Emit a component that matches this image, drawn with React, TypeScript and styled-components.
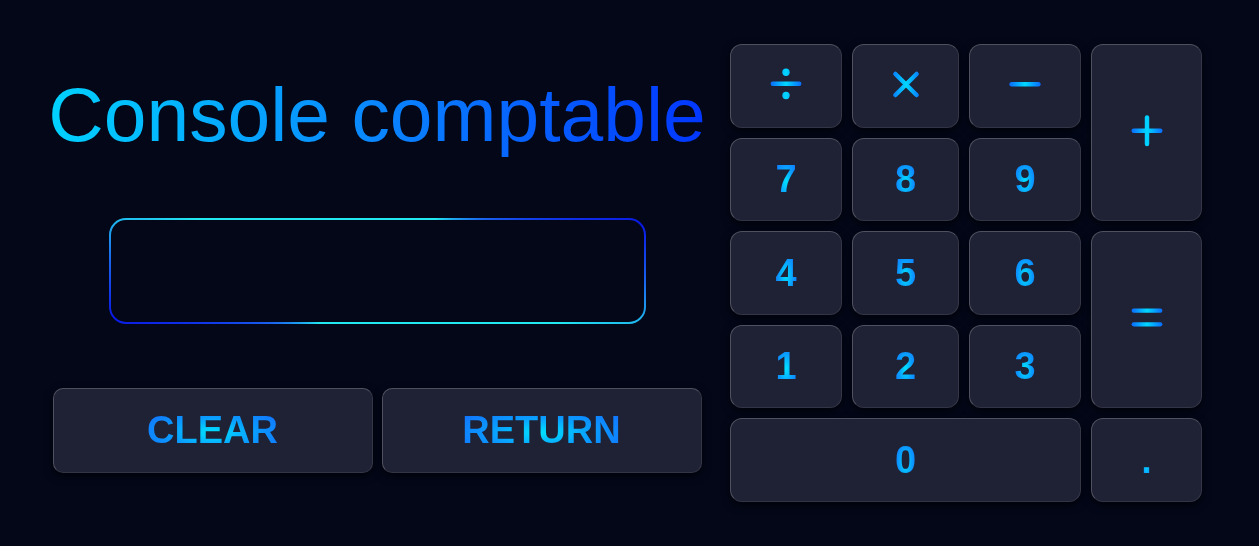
import React from "react";
import styled, { createGlobalStyle } from "styled-components";

const Global = createGlobalStyle`
  html, body {
    margin: 0;
    padding: 0;
    background: #030718;
  }
  body {
    font-family: "Liberation Sans", Arial, sans-serif;
  }
  * { box-sizing: border-box; }
`;

const Page = styled.main`
  height: 546px;
  display: flex;
  align-items: center;
  gap: 24px;
  padding-left: 48px;
  background: #030718;
`;

const LeftColumn = styled.section`
  width: 658px;
  display: flex;
  flex-direction: column;
  align-items: center;
  padding-bottom: 4px;
`;

const Title = styled.h1`
  margin: 0 0 60px 0;
  font-family: "Liberation Sans", Arial, sans-serif;
  font-weight: 400;
  font-size: 76.8px;
  line-height: 88px;
  white-space: nowrap;
  background: linear-gradient(90deg, #00d2ff 0%, #0a86ff 50%, #0236ff 100%);
  -webkit-background-clip: text;
  background-clip: text;
  color: transparent;
`;

const Display = styled.div`
  width: 537px;
  height: 106px;
  margin-bottom: 64px;
  border-radius: 17px;
  border: 2px solid transparent;
  background:
    linear-gradient(#030718, #030718) padding-box,
    conic-gradient(
      from 0deg,
      #22e8f0 0deg,
      #22e8f0 48deg,
      #1a62ee 64deg,
      #0a18e6 80deg,
      #1a62ee 92deg,
      #22e8f0 106deg,
      #22e8f0 228deg,
      #1a62ee 244deg,
      #0a18e6 260deg,
      #1a62ee 272deg,
      #22e8f0 286deg,
      #22e8f0 360deg
    ) border-box;
`;

const ActionRow = styled.div`
  width: 649px;
  display: grid;
  grid-template-columns: 1fr 1fr;
  gap: 9px;
`;

const KeyBase = styled.button`
  appearance: none;
  margin: 0;
  padding: 0;
  display: flex;
  align-items: center;
  justify-content: center;
  background: #1f2134;
  border: 1px solid rgba(255, 255, 255, 0.22);
  border-right-color: rgba(255, 255, 255, 0.1);
  border-bottom-color: rgba(255, 255, 255, 0.09);
  box-shadow: 0 3px 9px rgba(0, 0, 0, 0.65);
  cursor: pointer;
  font-family: "Liberation Sans", Arial, sans-serif;
`;

const ActionButton = styled(KeyBase)`
  height: 85px;
  border-radius: 10px;
`;

const Label = styled.span<{ $size?: number }>`
  display: inline-block;
  font-weight: 700;
  font-size: ${(p) => p.$size ?? 38}px;
  line-height: normal;
  background: radial-gradient(ellipse at 50% 55%, #00e2ff 0%, #0a9cff 45%, #1566ff 100%);
  -webkit-background-clip: text;
  background-clip: text;
  color: transparent;
`;

const Keypad = styled.section`
  display: grid;
  grid-template-columns: 112px 107px 112px 111px;
  grid-template-rows: repeat(5, 83.6px);
  gap: 10px;
`;

const Key = styled(KeyBase)<{ $col?: string; $row?: string }>`
  border-radius: 12px;
  grid-column: ${(p) => p.$col ?? "auto"};
  grid-row: ${(p) => p.$row ?? "auto"};
`;

const Icon = styled.svg`
  width: 40px;
  height: 40px;
  display: block;
  overflow: visible;
`;

const Grad = ({ id }: { id: string }) => (
  <defs>
    <linearGradient id={id} gradientUnits="userSpaceOnUse" x1="4" y1="0" x2="36" y2="0">
      <stop offset="0" stopColor="#0b68ff" />
      <stop offset="0.5" stopColor="#00d8ff" />
      <stop offset="1" stopColor="#0b68ff" />
    </linearGradient>
  </defs>
);

const DivideIcon = () => (
  <Icon viewBox="0 0 40 40">
    <Grad id="g-div" />
    <line x1="6.8" y1="17.8" x2="33.2" y2="17.8" stroke="url(#g-div)" strokeWidth="4.5" strokeLinecap="round" />
    <circle cx="20" cy="6.2" r="3.7" fill="url(#g-div)" />
    <circle cx="20" cy="29.5" r="3.7" fill="url(#g-div)" />
  </Icon>
);

const TimesIcon = () => (
  <Icon viewBox="0 0 40 40">
    <Grad id="g-times" />
    <line x1="9.4" y1="8" x2="30.6" y2="29" stroke="url(#g-times)" strokeWidth="4.5" strokeLinecap="round" />
    <line x1="30.6" y1="8" x2="9.4" y2="29" stroke="url(#g-times)" strokeWidth="4.5" strokeLinecap="round" />
  </Icon>
);

const MinusIcon = () => (
  <Icon viewBox="0 0 40 40">
    <Grad id="g-minus" />
    <line x1="6.6" y1="18.2" x2="33.4" y2="18.2" stroke="url(#g-minus)" strokeWidth="4.5" strokeLinecap="round" />
  </Icon>
);

const PlusIcon = () => (
  <Icon viewBox="0 0 40 40">
    <Grad id="g-plus" />
    <line x1="6.7" y1="17.8" x2="33.3" y2="17.8" stroke="url(#g-plus)" strokeWidth="4.5" strokeLinecap="round" />
    <line x1="20" y1="4.6" x2="20" y2="31" stroke="url(#g-plus)" strokeWidth="4.5" strokeLinecap="round" />
  </Icon>
);

const EqualsIcon = () => (
  <Icon viewBox="0 0 40 40">
    <Grad id="g-eq" />
    <line x1="6.7" y1="10.7" x2="33.3" y2="10.7" stroke="url(#g-eq)" strokeWidth="4.2" strokeLinecap="round" />
    <line x1="6.7" y1="24.3" x2="33.3" y2="24.3" stroke="url(#g-eq)" strokeWidth="4.2" strokeLinecap="round" />
  </Icon>
);

export default function App() {
  return (
    <>
      <Global />
      <Page>
        <LeftColumn>
          <Title>Console comptable</Title>
          <Display />
          <ActionRow>
            <ActionButton>
              <Label>CLEAR</Label>
            </ActionButton>
            <ActionButton>
              <Label>RETURN</Label>
            </ActionButton>
          </ActionRow>
        </LeftColumn>
        <Keypad>
          <Key aria-label="divide"><DivideIcon /></Key>
          <Key aria-label="multiply"><TimesIcon /></Key>
          <Key aria-label="minus"><MinusIcon /></Key>
          <Key aria-label="plus" $col="4" $row="1 / span 2"><PlusIcon /></Key>
          <Key><Label>7</Label></Key>
          <Key><Label>8</Label></Key>
          <Key><Label>9</Label></Key>
          <Key><Label>4</Label></Key>
          <Key><Label>5</Label></Key>
          <Key><Label>6</Label></Key>
          <Key aria-label="equals" $col="4" $row="3 / span 2"><EqualsIcon /></Key>
          <Key><Label>1</Label></Key>
          <Key><Label>2</Label></Key>
          <Key><Label>3</Label></Key>
          <Key $col="1 / span 3"><Label>0</Label></Key>
          <Key><Label>.</Label></Key>
        </Keypad>
      </Page>
    </>
  );
}
